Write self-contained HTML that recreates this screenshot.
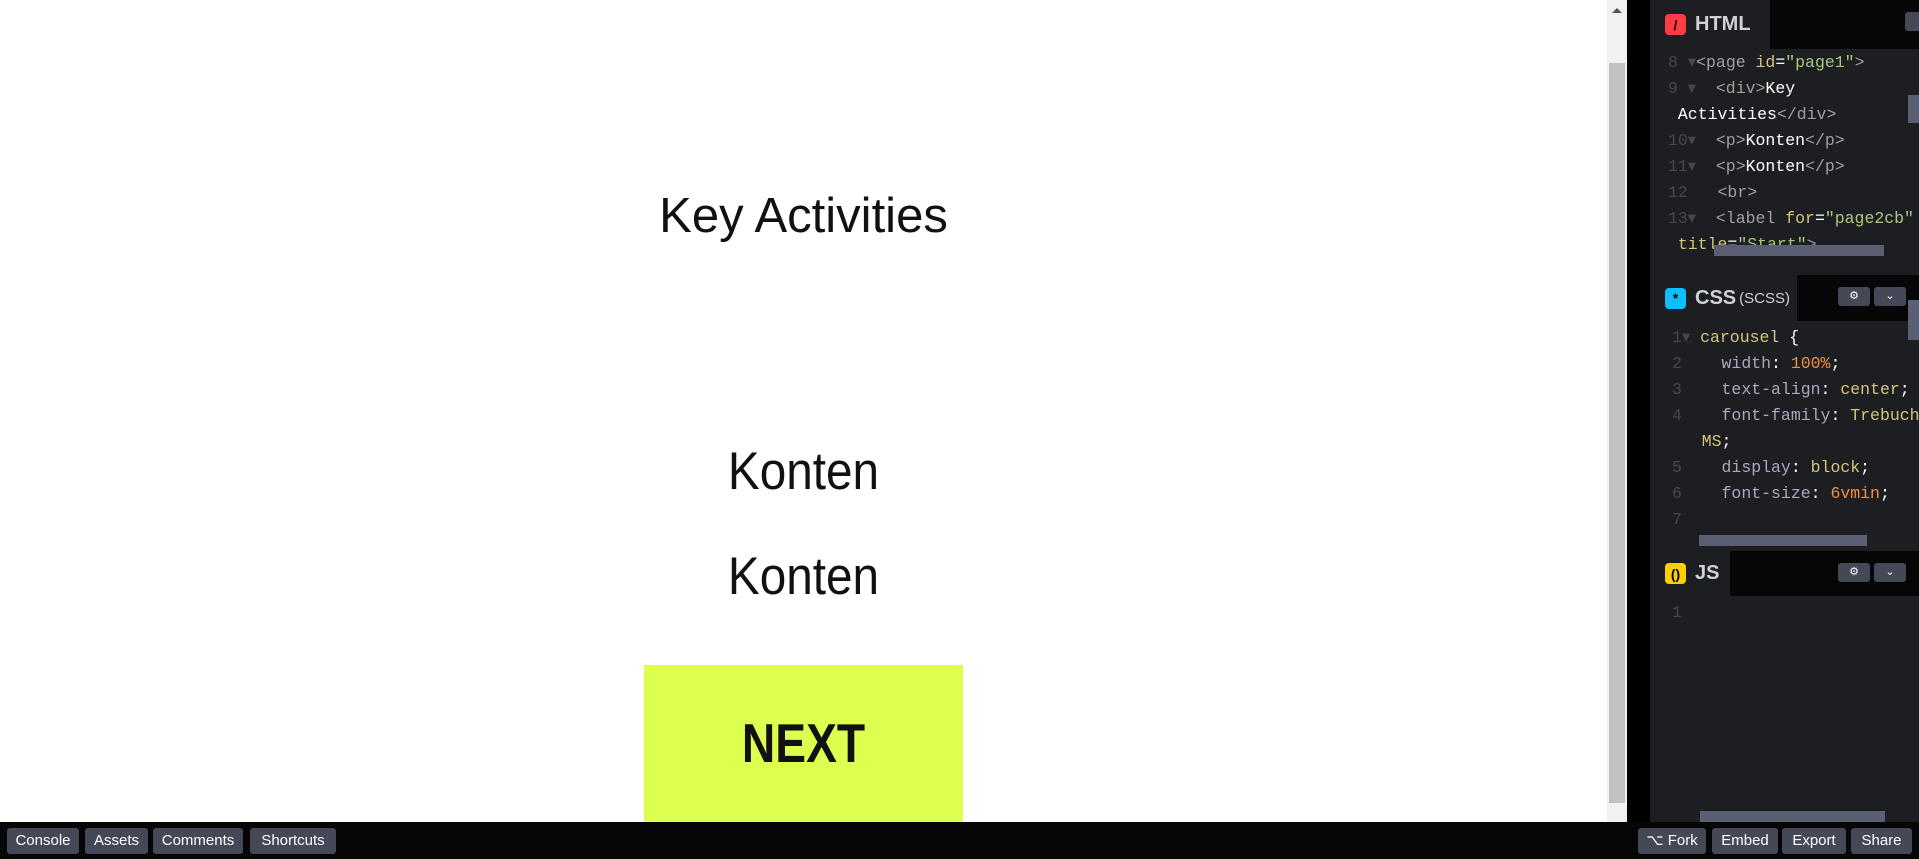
<!DOCTYPE html>
<html><head><style>
*{margin:0;padding:0;box-sizing:border-box}
body{width:1919px;height:859px;overflow:hidden;background:#000;position:relative;font-family:"Liberation Sans",sans-serif}
#prev{position:absolute;left:0;top:0;width:1607px;height:822px;background:#fff}
.t{position:absolute;left:0;width:1607px;text-align:center;color:#111;font-family:"Liberation Sans",sans-serif}
#sb{position:absolute;left:1607px;top:0;width:20px;height:822px;background:#f1f1f1}
#sb .th{position:absolute;left:2px;top:63px;width:16px;height:740px;background:#c1c1c1}
#ed{position:absolute;left:1650px;top:0;width:269px;height:822px;background:#1d1e22}
.hd{position:absolute;left:0;width:269px;background:#060606}
.tab{position:absolute;left:0;top:0;height:100%;background:#1d1e22;color:#cfd1d8;font-weight:bold;font-size:20px;display:flex;align-items:center;padding-left:15px}
.ic{width:21px;height:21px;border-radius:4px;margin-right:9px;display:inline-flex;align-items:center;justify-content:center;font-size:14px;color:#000}
.btn{position:absolute;top:12px;width:32px;height:19px;background:#444857;border-radius:3px;color:#fff;font-size:11px;text-align:center;line-height:19px}
.code{position:absolute;left:0;font-family:"Liberation Mono",monospace;font-size:16.5px;line-height:26px;color:#fff;white-space:pre}
.n{color:#44474f}.g{color:#9f9f9f}.y{color:#d4c47d}.s{color:#a6c97a}.o{color:#ee8e43}.p{color:#aca7be}
#bb{position:absolute;left:0;top:822px;width:1919px;height:37px;background:#060606}
.bt{position:absolute;top:6px;height:26px;background:#444857;color:#fff;border-radius:3px;font-size:15px;line-height:26px;text-align:center}
</style></head><body>
<div id="prev">
<div class="t" style="top:188px;font-size:49px">Key Activities</div>
<div class="t" style="top:441px;font-size:53px;transform:scaleX(0.9)">Konten</div>
<div class="t" style="top:546px;font-size:53px;transform:scaleX(0.9)">Konten</div>
<div style="position:absolute;left:644px;top:665px;width:319px;height:157px;background:#dcff50"></div>
<div class="t" style="top:711px;font-size:55px;font-weight:bold;transform:scaleX(0.84)">NEXT</div>
</div>
<div id="sb"><div class="th"></div><div style="position:absolute;left:5px;top:8px;border:5px solid transparent;border-bottom:5px solid #555;border-top:0"></div></div>
<div id="ed">
<div class="hd" style="top:0;height:49px"><div class="tab" style="width:120px"><span class="ic" style="background:#ff3c41">/</span>HTML</div><div class="btn" style="left:255px;top:12px"></div></div>
<div class="code" style="top:50px;left:18px"><span class="n">8 </span><span class="n">▾</span><span class="g">&lt;page </span><span class="y">id</span>=<span class="s">"page1"</span><span class="g">&gt;</span>
<span class="n">9 ▾</span>  <span class="g">&lt;div&gt;</span>Key
<span> </span>Activities<span class="g">&lt;/div&gt;</span>
<span class="n">10▾</span>  <span class="g">&lt;p&gt;</span>Konten<span class="g">&lt;/p&gt;</span>
<span class="n">11▾</span>  <span class="g">&lt;p&gt;</span>Konten<span class="g">&lt;/p&gt;</span>
<span class="n">12 </span>  <span class="g">&lt;br&gt;</span>
<span class="n">13▾</span>  <span class="g">&lt;label </span><span class="y">for</span>=<span class="s">"page2cb"</span>
<span> </span><span class="y">title</span>=<span class="s">"Start"</span><span class="g">&gt;</span></div>
<div style="position:absolute;left:64px;top:245px;width:170px;height:11px;background:#5a5f73"></div>
<div style="position:absolute;left:258px;top:95px;width:11px;height:28px;background:#5a5f73"></div>
<div class="hd" style="top:275px;height:46px"><div class="tab" style="width:147px"><span class="ic" style="background:#0ebeff">*</span>CSS<span style="font-weight:normal;font-size:15px;margin-left:3px">(SCSS)</span></div><div class="btn" style="left:188px"> ⚙</div><div class="btn" style="left:224px">⌄</div></div>
<div class="code" style="top:325px;left:22px"><span class="n">1▾</span> <span class="y">carousel</span> {
<span class="n">2</span>    <span class="p">width</span>: <span class="o">100%</span>;
<span class="n">3</span>    <span class="p">text-align</span>: <span class="y">center</span>;
<span class="n">4</span>    <span class="p">font-family</span>: <span class="y">Trebuchet</span>
<span class="n"> </span>  <span class="y">MS</span>;
<span class="n">5</span>    <span class="p">display</span>: <span class="y">block</span>;
<span class="n">6</span>    <span class="p">font-size</span>: <span class="o">6vmin</span>;
<span class="n">7</span></div>
<div style="position:absolute;left:49px;top:535px;width:168px;height:11px;background:#5a5f73"></div>
<div style="position:absolute;left:258px;top:300px;width:11px;height:40px;background:#5a5f73"></div>
<div class="hd" style="top:551px;height:45px"><div class="tab" style="width:80px"><span class="ic" style="background:#fcd000">()</span>JS</div><div class="btn" style="left:188px"> ⚙</div><div class="btn" style="left:224px">⌄</div></div>
<div class="code" style="top:600px;left:22px"><span class="n">1</span></div>
<div style="position:absolute;left:50px;top:811px;width:185px;height:11px;background:#5a5f73"></div>
</div>
<div id="bb">
<div class="bt" style="left:7px;width:72px">Console</div>
<div class="bt" style="left:85px;width:63px">Assets</div>
<div class="bt" style="left:153px;width:90px">Comments</div>
<div class="bt" style="left:250px;width:86px">Shortcuts</div>
<div class="bt" style="left:1638px;width:68px">⌥ Fork</div>
<div class="bt" style="left:1712px;width:66px">Embed</div>
<div class="bt" style="left:1782px;width:64px">Export</div>
<div class="bt" style="left:1851px;width:61px">Share</div>
</div>
</body></html>
